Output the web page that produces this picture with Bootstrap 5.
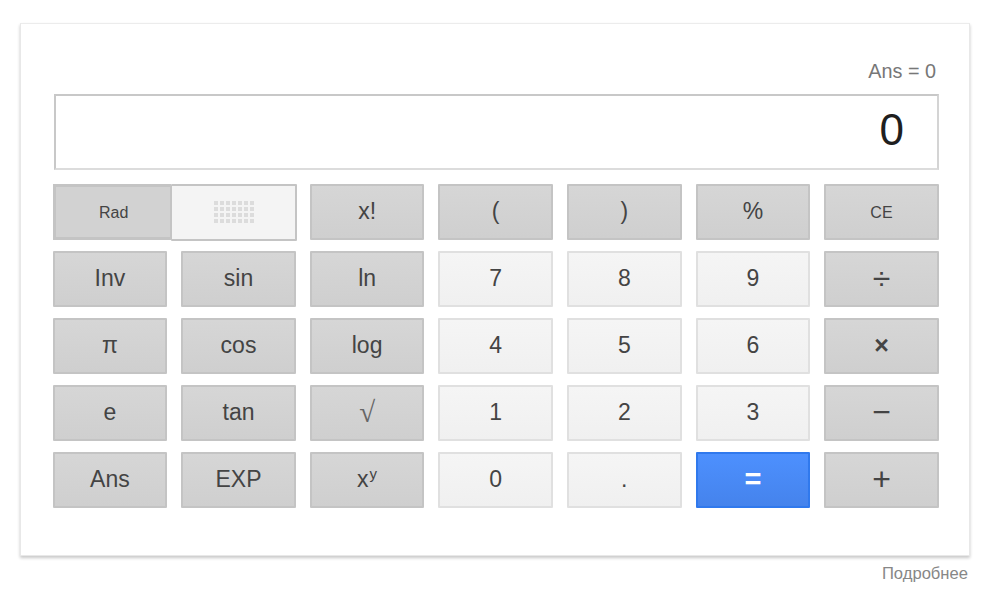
<!DOCTYPE html>
<html lang="ru">
<head>
<meta charset="utf-8">
<title>Калькулятор</title>
<link href="https://cdn.jsdelivr.net/npm/bootstrap@5.3.0/dist/css/bootstrap.min.css" rel="stylesheet">
<style>
html,body{height:594px;overflow:hidden;background:#fff;}
body{font-family:"Liberation Sans",Arial,sans-serif;color:#444;}
.calc-wrap{width:950px;margin:23px 0 0 20px;}
.calc-card{height:533px;background:#fff;border:1px solid #e8e8e8;border-top-color:#ececec;box-shadow:0 2px 3px rgba(0,0,0,.22);padding:35px 30px 0 32px;}
.ans-line{height:35px;padding-right:3px;font-size:19.8px;line-height:24px;color:#777;text-align:right;}
.calc-display{height:76px;margin-left:1px;border:2px solid #c8c8c8;border-bottom-color:#dcdcdc;border-right-color:#d4d4d4;font-size:44px;line-height:68px;color:#1f1f1f;text-align:right;padding-right:33px;}
.key-grid{display:grid;grid-template-columns:repeat(7,114.6px);grid-auto-rows:56px;column-gap:14px;row-gap:11px;margin:14px 0 0 -.4px;}
.calc-key{display:flex;align-items:center;justify-content:center;padding:0 0 2px;border-radius:1px;font-size:23px;line-height:1;color:#444;}
.key-dark{background:linear-gradient(#d6d6d6,#cfcfcf);border:2px solid #c4c4c4;}
.key-light{background:linear-gradient(#f5f5f5,#f0f0f0);border:2px solid #e0e0e0;}
.key-blue{background:linear-gradient(#4d90fe,#4583ec);border:2px solid #3079ed;color:#fff;font-weight:700;font-size:29px;}
.key-sym{font-size:32px;}
.key-times{font-size:25px;font-weight:700;}
.key-small{font-size:16px;padding-bottom:0;padding-top:2px;}
.key-root{font-family:"Liberation Serif",serif;font-size:29px;color:#666;}
.mode-toggle{grid-column:span 2;display:flex;margin-right:-1px;}
.mode-rad{width:118px;height:56px;padding:2px 0 0 2px;font-size:16px;background:#d2d2d2;border:3px solid #c4c4c4;border-right-width:1px;border-radius:0;}
.mode-deg{flex:1;height:57px;padding:0 0 1px 2px;background:#f4f4f4;border:2px solid #c4c4c4;border-left-width:1px;}
.key-sup{font-size:15px;position:relative;top:-6px;margin-left:1px;}
.more-line{font-size:16.6px;line-height:20px;color:#878787;text-align:right;padding:8px 2px 0 0;}
</style>
</head>
<body>
<div class="calc-wrap">
  <div class="calc-card">
    <div class="ans-line">Ans = 0</div>
    <div class="calc-display">0</div>
    <div class="key-grid">
      <div class="mode-toggle">
        <div class="calc-key mode-rad">Rad</div>
        <div class="calc-key mode-deg">
          <svg width="40" height="22" viewBox="0 0 40 22" aria-hidden="true">
            <defs><pattern id="dots" width="6" height="6" patternUnits="userSpaceOnUse"><rect width="4" height="4" fill="#dcdcdc"/></pattern></defs>
            <rect width="40" height="22" fill="url(#dots)"/>
          </svg>
        </div>
      </div>
      <div class="calc-key key-dark">x!</div>
      <div class="calc-key key-dark">(</div>
      <div class="calc-key key-dark">)</div>
      <div class="calc-key key-dark">%</div>
      <div class="calc-key key-dark key-small">CE</div>

      <div class="calc-key key-dark">Inv</div>
      <div class="calc-key key-dark">sin</div>
      <div class="calc-key key-dark">ln</div>
      <div class="calc-key key-light">7</div>
      <div class="calc-key key-light">8</div>
      <div class="calc-key key-light">9</div>
      <div class="calc-key key-dark key-sym">÷</div>

      <div class="calc-key key-dark">π</div>
      <div class="calc-key key-dark">cos</div>
      <div class="calc-key key-dark">log</div>
      <div class="calc-key key-light">4</div>
      <div class="calc-key key-light">5</div>
      <div class="calc-key key-light">6</div>
      <div class="calc-key key-dark key-times">×</div>

      <div class="calc-key key-dark">e</div>
      <div class="calc-key key-dark">tan</div>
      <div class="calc-key key-dark key-root">√</div>
      <div class="calc-key key-light">1</div>
      <div class="calc-key key-light">2</div>
      <div class="calc-key key-light">3</div>
      <div class="calc-key key-dark key-sym">−</div>

      <div class="calc-key key-dark">Ans</div>
      <div class="calc-key key-dark">EXP</div>
      <div class="calc-key key-dark">x<span class="key-sup">y</span></div>
      <div class="calc-key key-light">0</div>
      <div class="calc-key key-light">.</div>
      <div class="calc-key key-blue">=</div>
      <div class="calc-key key-dark key-sym">+</div>
    </div>
  </div>
  <div class="more-line">Подробнее</div>
</div>
<script src="https://cdn.jsdelivr.net/npm/bootstrap@5.3.0/dist/js/bootstrap.bundle.min.js"></script>
</body>
</html>
